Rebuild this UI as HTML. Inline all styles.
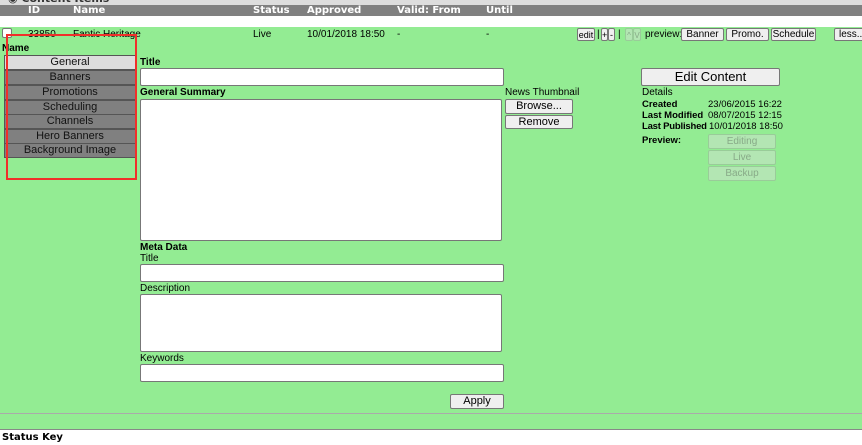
<!DOCTYPE html>
<html><head><style>
*{box-sizing:border-box;margin:0;padding:0}
body{width:862px;height:445px;position:relative;overflow:hidden;background:#fff;font-family:"Liberation Sans",sans-serif;font-size:10px;color:#000}
.a{position:absolute;white-space:nowrap}
.h{font-family:"DejaVu Sans",sans-serif;font-weight:bold;font-size:10px;color:#fff}
.inp{position:absolute;background:#fff;border:1px solid #777;border-radius:2px}
.btn{position:absolute;background:#efefef;border:1px solid #777;border-radius:2px;text-align:center;font-size:10px;line-height:12px}
.dis{position:absolute;background:#b3e6b3;border:1px solid #9c9;border-radius:2px;text-align:center;color:#8a8;font-size:10px;line-height:13px}
.tab{position:absolute;left:4px;width:132px;height:15px;background:#808080;border:1px solid #555;text-align:center;font-size:11px;line-height:13px;color:#111}
.d{font-size:9.5px}
</style></head><body>
<div class="a" style="left:0;top:0;width:862px;height:5px;background:#ddd"></div>
<div class="a h" style="left:8px;top:-8px;color:#333;font-size:11px">◉ Content Items</div>
<div class="a" style="left:0;top:5px;width:862px;height:11px;background:#808080"></div>
<div class="a h" style="left:28px;top:5px">ID</div>
<div class="a h" style="left:73px;top:5px">Name</div>
<div class="a h" style="left:253px;top:5px">Status</div>
<div class="a h" style="left:307px;top:5px">Approved</div>
<div class="a h" style="left:397px;top:5px">Valid: From</div>
<div class="a h" style="left:486px;top:5px">Until</div>
<div class="a" style="left:0;top:27px;width:862px;height:386px;background:#93ec93"></div>
<div class="a" style="left:0;top:413px;width:862px;height:1px;background:#aaa"></div>
<div class="a" style="left:0;top:414px;width:862px;height:15px;background:#93ec93"></div>
<div class="a" style="left:0;top:429px;width:862px;height:1px;background:#888"></div>
<div class="a h" style="left:2px;top:432px;color:#000">Status Key</div>

<div class="inp" style="left:2px;top:28px;width:10px;height:10px"></div>
<div class="a" style="left:28px;top:29px">33850</div>
<div class="a" style="left:73px;top:29px">Fantic Heritage</div>
<div class="a" style="left:253px;top:29px">Live</div>
<div class="a" style="left:307px;top:29px">10/01/2018 18:50</div>
<div class="a" style="left:397px;top:29px">-</div>
<div class="a" style="left:486px;top:29px">-</div>
<div class="btn" style="left:577px;top:28px;width:18px;height:13px;font-size:9px">edit</div>
<div class="a" style="left:597px;top:29px">|</div>
<div class="btn" style="left:601px;top:28px;width:7px;height:13px;font-size:9px">+</div>
<div class="btn" style="left:608px;top:28px;width:7px;height:13px;font-size:9px">-</div>
<div class="a" style="left:618px;top:29px">|</div>
<div class="dis" style="left:625px;top:28px;width:8px;height:13px;font-size:8px">^</div>
<div class="dis" style="left:633px;top:28px;width:8px;height:13px;font-size:8px">V</div>
<div class="a" style="left:645px;top:29px">preview:</div>
<div class="btn" style="left:681px;top:28px;width:43px;height:13px">Banner</div>
<div class="btn" style="left:726px;top:28px;width:43px;height:13px">Promo.</div>
<div class="btn" style="left:771px;top:28px;width:45px;height:13px">Schedule</div>
<div class="btn" style="left:834px;top:28px;width:32px;height:13px;text-align:left;padding-left:4px">less...</div>

<div class="a" style="left:2px;top:43px;font-weight:bold">Name</div>
<div class="tab" style="top:55px;background:#ddd">General</div>
<div class="tab" style="top:70px">Banners</div>
<div class="tab" style="top:85px">Promotions</div>
<div class="tab" style="top:100px">Scheduling</div>
<div class="tab" style="top:114px">Channels</div>
<div class="tab" style="top:129px">Hero Banners</div>
<div class="tab" style="top:143px">Background Image</div>
<div class="a" style="left:6px;top:34px;width:131px;height:146px;border:2px solid #f0302a"></div>

<div class="a" style="left:140px;top:57px;font-weight:bold">Title</div>
<div class="inp" style="left:140px;top:68px;width:364px;height:18px"></div>
<div class="a" style="left:140px;top:87px;font-weight:bold">General Summary</div>
<div class="inp" style="left:140px;top:99px;width:362px;height:142px"></div>
<div class="a" style="left:140px;top:242px;font-weight:bold">Meta Data</div>
<div class="a" style="left:140px;top:253px">Title</div>
<div class="inp" style="left:140px;top:264px;width:364px;height:18px"></div>
<div class="a" style="left:140px;top:283px">Description</div>
<div class="inp" style="left:140px;top:294px;width:362px;height:58px"></div>
<div class="a" style="left:140px;top:353px">Keywords</div>
<div class="inp" style="left:140px;top:364px;width:364px;height:18px"></div>
<div class="btn" style="left:450px;top:394px;width:54px;height:15px;font-size:11px;line-height:13px">Apply</div>

<div class="a" style="left:505px;top:87px">News Thumbnail</div>
<div class="btn" style="left:505px;top:99px;width:68px;height:15px;font-size:11px;line-height:13px">Browse...</div>
<div class="btn" style="left:505px;top:115px;width:68px;height:14px;font-size:11px;line-height:12px">Remove</div>

<div class="btn" style="left:641px;top:68px;width:139px;height:18px;font-size:13px;line-height:16px">Edit Content</div>
<div class="a" style="left:642px;top:87px">Details</div>
<div class="a d" style="left:642px;top:99px;font-weight:bold">Created</div>
<div class="a d" style="left:708px;top:99px">23/06/2015 16:22</div>
<div class="a d" style="left:642px;top:110px;font-weight:bold">Last Modified</div>
<div class="a d" style="left:708px;top:110px">08/07/2015 12:15</div>
<div class="a d" style="left:642px;top:121px;font-weight:bold;letter-spacing:-0.2px">Last Published</div>
<div class="a d" style="left:709px;top:121px">10/01/2018 18:50</div>
<div class="a d" style="left:642px;top:135px;font-weight:bold">Preview:</div>
<div class="dis" style="left:708px;top:134px;width:68px;height:15px">Editing</div>
<div class="dis" style="left:708px;top:150px;width:68px;height:15px">Live</div>
<div class="dis" style="left:708px;top:166px;width:68px;height:15px">Backup</div>
</body></html>
